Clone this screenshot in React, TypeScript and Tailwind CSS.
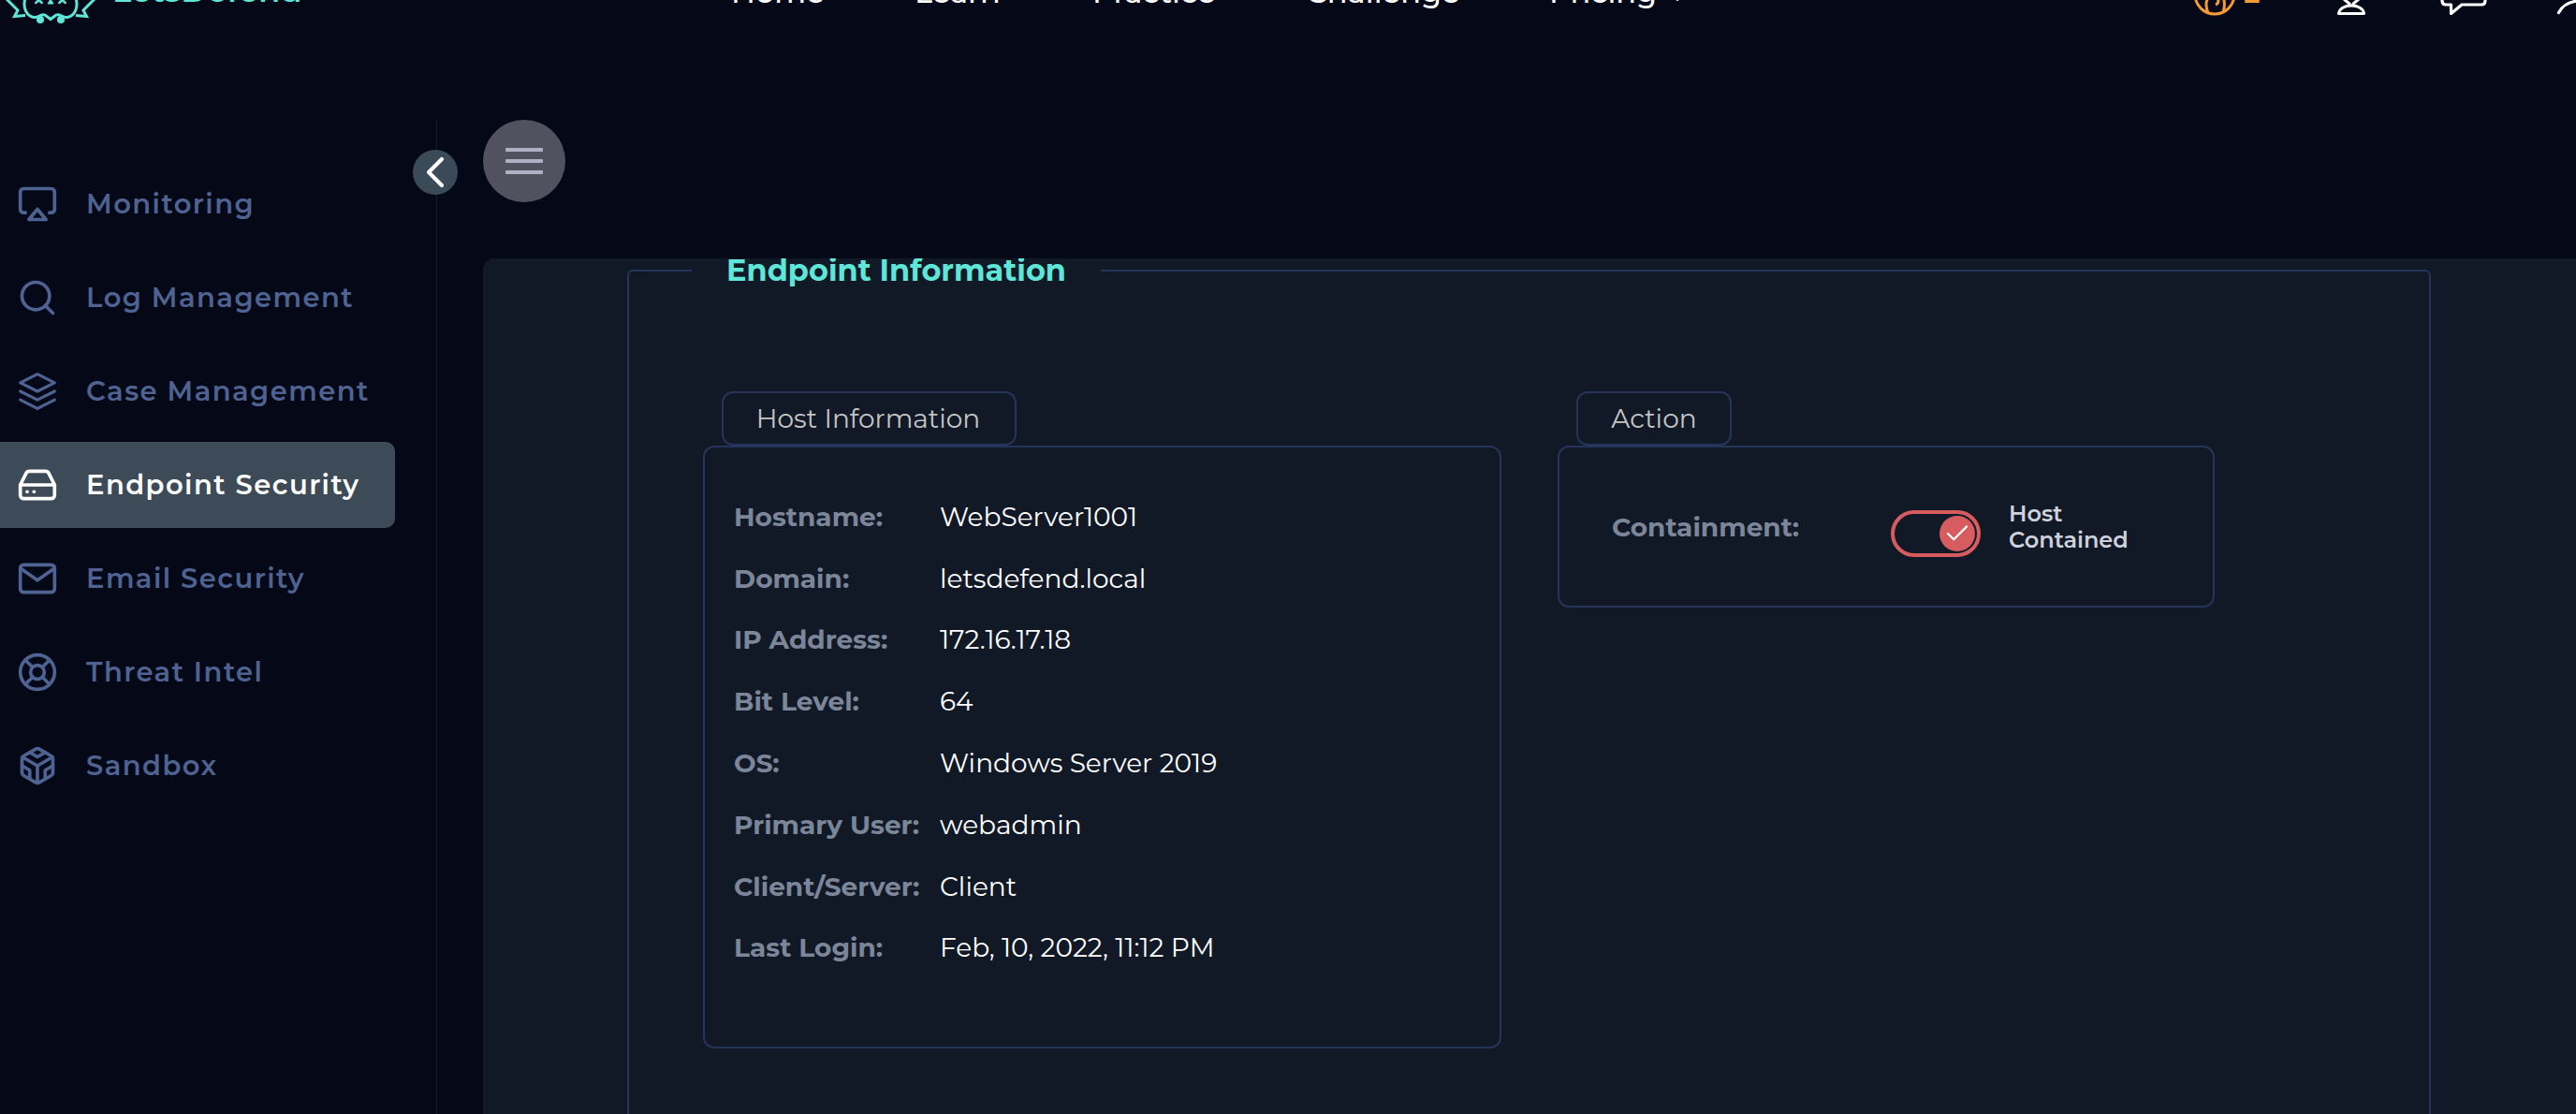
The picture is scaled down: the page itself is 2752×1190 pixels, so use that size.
import React from "react";
import { ChevronLeft, Search, Codesandbox, Check, ChevronDown } from "lucide-react";

const F = "font-['Montserrat','Inter','Noto_Sans',sans-serif]";

type P = { className?: string };
const S = { viewBox: "0 0 24 24", fill: "none", stroke: "currentColor", strokeWidth: 2, strokeLinecap: "round" as const, strokeLinejoin: "round" as const };

function Airplay({ className }: P) {
  return (
    <svg {...S} className={className}>
      <path d="M5 17H4a2 2 0 0 1-2-2V5a2 2 0 0 1 2-2h16a2 2 0 0 1 2 2v10a2 2 0 0 1-2 2h-1" />
      <polygon points="12 15 17 21 7 21 12 15" />
    </svg>
  );
}
function Layers({ className }: P) {
  return (
    <svg {...S} strokeWidth={1.7} className={className}>
      <polygon points="12 2 2 7 12 12 22 7 12 2" />
      <polyline points="2 17 12 22 22 17" />
      <polyline points="2 12 12 17 22 12" />
    </svg>
  );
}
function Drive({ className }: P) {
  return (
    <svg {...S} className={className}>
      <line x1="22" y1="12" x2="2" y2="12" />
      <path d="M5.45 5.11 2 12v6a2 2 0 0 0 2 2h16a2 2 0 0 0 2-2v-6l-3.45-6.89A2 2 0 0 0 16.76 4H7.24a2 2 0 0 0-1.79 1.11z" />
      <line x1="6" y1="16" x2="6.01" y2="16" />
      <line x1="10" y1="16" x2="10.01" y2="16" />
    </svg>
  );
}
function Mail({ className }: P) {
  return (
    <svg {...S} className={className}>
      <path d="M4 4h16c1.1 0 2 .9 2 2v12c0 1.1-.9 2-2 2H4c-1.1 0-2-.9-2-2V6c0-1.1.9-2 2-2z" />
      <polyline points="22,6 12,13 2,6" />
    </svg>
  );
}
function Buoy({ className }: P) {
  return (
    <svg {...S} className={className}>
      <circle cx="12" cy="12" r="10" />
      <circle cx="12" cy="12" r="4" />
      <line x1="4.93" y1="4.93" x2="9.17" y2="9.17" />
      <line x1="14.83" y1="14.83" x2="19.07" y2="19.07" />
      <line x1="14.83" y1="9.17" x2="19.07" y2="4.93" />
      <line x1="4.93" y1="19.07" x2="9.17" y2="14.83" />
    </svg>
  );
}

const items = [
  { label: "Monitoring", Icon: Airplay },
  { label: "Log Management", Icon: Search },
  { label: "Case Management", Icon: Layers },
  { label: "Endpoint Security", Icon: Drive, active: true },
  { label: "Email Security", Icon: Mail },
  { label: "Threat Intel", Icon: Buoy },
  { label: "Sandbox", Icon: Codesandbox },
];

const rows = [
  ["Hostname:", "WebServer1001"],
  ["Domain:", "letsdefend.local"],
  ["IP Address:", "172.16.17.18"],
  ["Bit Level:", "64"],
  ["OS:", "Windows Server 2019"],
  ["Primary User:", "webadmin"],
  ["Client/Server:", "Client"],
  ["Last Login:", "Feb, 10, 2022, 11:12 PM"],
];

function Logo() {
  return (
    <svg viewBox="0 0 108 26" className="absolute left-0 top-0 w-[108px] h-[26px]" fill="none" stroke="#5ee7d8" strokeWidth="3">
      <path d="M7 -1 L19 11 L15.5 17.5 L27 16.5 M101 -1 L89 11 L92.5 17.5 L81 16.5" />
      <path d="M27 -2 C24 8 28 17 36 18.5 C41 19.5 44 14 48 16 L54 20.5 L60 16 C64 14 67 19.5 72 18.5 C80 17 84 8 81 -2" />
      <path d="M38 4 C39 0 44 0 45 4 M63 4 C64 0 69 0 70 4" strokeWidth="2.5" />
      <path d="M54 -1 L57 4 L51 4 Z" fill="#5ee7d8" strokeWidth="1" />
      <circle cx="43" cy="21" r="4" fill="#5ee7d8" stroke="none" />
      <circle cx="65" cy="21" r="4" fill="#5ee7d8" stroke="none" />
    </svg>
  );
}

export default function App() {
  return (
    <div className={`w-[2752px] h-[1190px] overflow-hidden bg-[#050816] flex flex-col ${F}`}>
      <header className="h-[128px] shrink-0 relative">
        <Logo />
        <span className="absolute left-[120px] top-[-32px] text-[34px] leading-[44px] font-semibold text-[#5ee7d8] whitespace-nowrap">LetsDefend</span>
        <nav className="absolute left-[781px] top-[-28px] flex text-[32px] leading-[40px] font-medium text-white whitespace-nowrap">
          <span className="w-[196px]">Home</span>
          <span className="w-[190px]">Learn</span>
          <span className="w-[228px]">Practice</span>
          <span className="w-[260px]">Challenge</span>
          <span className="flex items-center gap-[10px]">Pricing <ChevronDown size={24} className="mt-[10px]" /></span>
        </nav>
        <svg viewBox="0 0 48 48" className="absolute left-[2342px] top-[-30px] w-[48px] h-[48px]" fill="none" stroke="#f59a35" strokeWidth="3">
          <circle cx="24" cy="24" r="21" />
          <path d="M17 44 C13 34 15 26 22 26 C28 26 30 33 25 35 M33 43 C36 34 34 24 28 20" />
        </svg>
        <span className="absolute left-[2397px] top-[-25px] text-[30px] leading-[36px] font-semibold text-[#f59a35]">2</span>
        <svg viewBox="0 0 34 18" className="absolute left-[2495px] top-0 w-[34px] h-[18px]" fill="none" stroke="white" strokeWidth="3" strokeLinejoin="round">
          <path d="M9 -1 L15 4 L15 6 M25 -1 L19 4 L19 6" />
          <path d="M3.5 14.5 C4 9 10 6 17 6 C24 6 30 9 30.5 14.5 Z" />
        </svg>
        <svg viewBox="0 0 52 18" className="absolute left-[2606px] top-0 w-[52px] h-[18px]" fill="none" stroke="white" strokeWidth="3.2" strokeLinecap="round" strokeLinejoin="round">
          <path d="M3 -4 V1 Q3 5 7 5 H12.5 V14.5 L24 5 H45 Q49 5 49 1 V-4" />
        </svg>
        <svg viewBox="0 0 22 16" className="absolute left-[2730px] top-0 w-[22px] h-[16px]" fill="none" stroke="white" strokeWidth="3.2" strokeLinecap="round">
          <path d="M3.5 13.5 C7 7 13 2 24 1" />
        </svg>
      </header>

      <div className="flex flex-1 min-h-0">
        <aside className="w-[467px] shrink-0 border-r border-[#141b2c] relative pt-[44px]">
          <button className="absolute right-[-23px] top-[32px] w-[48px] h-[48px] rounded-full bg-[#3b4a57] flex items-center justify-center text-white">
            <ChevronLeft size={56} strokeWidth={1.8} className="shrink-0" />
          </button>
          <ul className="w-[422px] flex flex-col gap-[8px]">
            {items.map(({ label, Icon, active }) => (
              <li
                key={label}
                className={`h-[92px] flex items-center pl-[18px] rounded-r-[10px] ${active ? "bg-[#3d4a58] text-white" : "text-[#4f6392]"}`}
              >
                <Icon className="w-[44px] h-[44px] shrink-0" />
                <span className="ml-[30px] text-[29px] font-semibold tracking-[1.45px] whitespace-nowrap">{label}</span>
              </li>
            ))}
          </ul>
        </aside>

        <main className="flex-1 min-w-0 min-h-0 pl-[49px] flex flex-col">
          <button className="w-[88px] h-[88px] shrink-0 rounded-full bg-[#515160] flex flex-col gap-[8px] items-center justify-center">
            <span className="w-[40px] h-[4px] rounded-[1px] bg-[#b0b0c4]" />
            <span className="w-[40px] h-[4px] rounded-[1px] bg-[#b0b0c4]" />
            <span className="w-[40px] h-[4px] rounded-[1px] bg-[#b0b0c4]" />
          </button>
          <section className="mt-[60px] flex-1 min-h-0 overflow-hidden bg-[#111927] rounded-tl-[12px] pl-[154px] pr-[155px] pt-[12px]">
            <div className="relative h-[1000px] border-2 border-[#26345a] rounded-t-[6px] pl-[79px] pt-[128px]">
              <h2 className="absolute left-[67px] top-[-19px] px-[37px] bg-[#111927] text-[32px] leading-[36px] font-bold text-[#5ee7d8] whitespace-nowrap">
                Endpoint Information
              </h2>
              <div className="flex items-start gap-[60px]">
                <div className="w-[853px]">
                  <div className="ml-[20px] w-[315px] h-[58px] border-2 border-[#26345a] rounded-[12px] flex items-center justify-center pr-[2px] text-[28px] text-[#c4c4c4]">
                    Host Information
                  </div>
                  <div className="h-[644px] border-2 border-[#26345a] rounded-[12px] pl-[31px] pt-[41px]">
                    {rows.map(([k, v]) => (
                      <div key={k} className="h-[65.8px] flex items-center text-[28px] whitespace-nowrap">
                        <span className="w-[220px] font-bold text-[#7c8699]">{k}</span>
                        <span className="text-white">{v}</span>
                      </div>
                    ))}
                  </div>
                </div>
                <div className="w-[702px]">
                  <div className="ml-[20px] w-[166px] h-[58px] border-2 border-[#26345a] rounded-[12px] flex items-center justify-center text-[28px] text-[#c4c4c4]">
                    Action
                  </div>
                  <div className="h-[173px] border-2 border-[#26345a] rounded-[12px] pl-[56px] flex items-center">
                    <span className="w-[298px] text-[28px] font-bold text-[#7c8699]">Containment:</span>
                    <div className="mt-[14px] w-[96px] h-[50px] rounded-full border-[4px] border-[#d65c5f] flex items-center justify-end pr-[2px]">
                      <div className="w-[38px] h-[38px] rounded-full bg-[#d65c5f] flex items-center justify-center text-white">
                        <Check size={30} strokeWidth={1.8} />
                      </div>
                    </div>
                    <span className="ml-[30px] w-[140px] text-[24px] leading-[28px] font-semibold text-[#ced1dc]">Host Contained</span>
                  </div>
                </div>
              </div>
            </div>
          </section>
        </main>
      </div>
    </div>
  );
}
